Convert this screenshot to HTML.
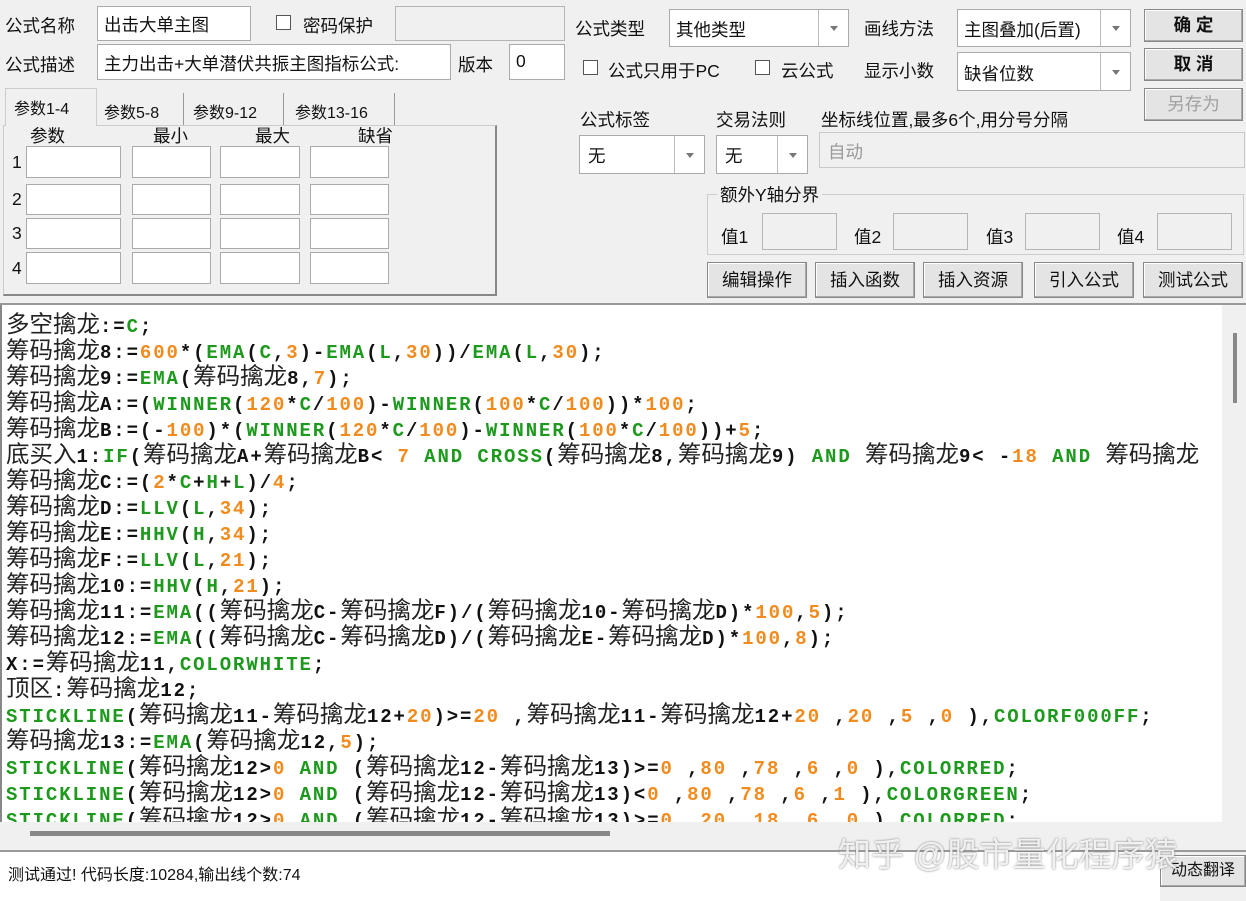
<!DOCTYPE html>
<html><head><meta charset="utf-8"><style>
*{box-sizing:border-box;margin:0;padding:0}
body{width:1246px;height:901px;background:#f0f0f0;font-family:"Liberation Sans","Noto Sans CJK SC",sans-serif;font-size:17.5px;color:#111;position:relative;overflow:hidden}
.a{position:absolute;white-space:nowrap}
.in{position:absolute;background:#fff;border:1px solid #aaa}
.dis{position:absolute;background:#f0f0f0;border:1px solid #b5b5b5}
.btn{position:absolute;background:#e4e4e4;border:1px solid #888;box-shadow:inset -1px -1px 0 #aaa,inset 1px 1px 0 #fff;text-align:center;font-size:17.5px}
.cb{position:absolute;width:15px;height:15px;border:1px solid #555;background:#fff}
.dd{position:absolute;border-left:1px solid #bbb;width:30px;top:0;bottom:0;right:0}
.dd:after{content:"";position:absolute;left:11px;top:50%;margin-top:-2px;border-left:4px solid transparent;border-right:4px solid transparent;border-top:5px solid #777}
#code{position:absolute;left:0;top:305px;width:1222px;height:517px;background:#fff;overflow:hidden;border-left:2px solid #888}
.l{position:absolute;left:4px;white-space:nowrap;font-family:"Liberation Mono","Noto Sans CJK SC",monospace;font-weight:bold;font-size:19px;letter-spacing:1.9px;height:26px;line-height:26px;color:#111}
.c{font-family:"Noto Sans CJK SC","WenQuanYi Zen Hei",sans-serif;font-weight:normal;font-size:23.5px;letter-spacing:0;color:#222}
.g{color:#1d9a1d}.o{color:#f28b1e}
</style></head><body>
<div class="a" style="left:5px;top:13px">公式名称</div>
<div class="in" style="left:97px;top:6px;width:154px;height:35px"><span class="a" style="left:6px;top:5px">出击大单主图</span></div>
<div class="cb" style="left:276px;top:15px"></div>
<div class="a" style="left:303px;top:13px">密码保护</div>
<div class="dis" style="left:395px;top:6px;width:170px;height:35px"></div>
<div class="a" style="left:5px;top:52px">公式描述</div>
<div class="in" style="left:97px;top:44px;width:354px;height:36px"><span class="a" style="left:6px;top:6px">主力出击+大单潜伏共振主图指标公式:</span></div>
<div class="a" style="left:458px;top:52px">版本</div>
<div class="in" style="left:509px;top:44px;width:56px;height:36px"><span class="a" style="left:6px;top:6px">0</span></div>
<div class="a" style="left:5px;top:88px;width:92px;height:38px;border:1px solid #ccc;border-bottom:none;background:#f0f0f0;z-index:2"></div>
<div class="a" style="left:14px;top:95px;font-size:16px;z-index:3">参数1-4</div>
<div class="a" style="left:97px;top:93px;width:87px;height:32px;border-right:1px solid #999"></div>
<div class="a" style="left:104px;top:99px;font-size:16px">参数5-8</div>
<div class="a" style="left:184px;top:93px;width:100px;height:32px;border-right:1px solid #999"></div>
<div class="a" style="left:193px;top:99px;font-size:16px">参数9-12</div>
<div class="a" style="left:284px;top:93px;width:111px;height:32px;border-right:1px solid #999"></div>
<div class="a" style="left:295px;top:99px;font-size:16px">参数13-16</div>
<div class="a" style="left:3px;top:125px;width:494px;height:171px;border:1px solid #ccc;border-right:2px solid #888;border-bottom:2px solid #888"></div>
<div class="a" style="left:30px;top:123px">参数</div><div class="a" style="left:153px;top:123px">最小</div><div class="a" style="left:255px;top:123px">最大</div><div class="a" style="left:358px;top:123px">缺省</div>
<div class="a" style="left:12px;top:152px">1</div><div class="a" style="left:12px;top:189px">2</div><div class="a" style="left:12px;top:223px">3</div><div class="a" style="left:12px;top:258px">4</div>
<div class="in" style="left:26px;top:146px;width:95px;height:32px"></div><div class="in" style="left:132px;top:146px;width:79px;height:32px"></div><div class="in" style="left:220px;top:146px;width:80px;height:32px"></div><div class="in" style="left:310px;top:146px;width:79px;height:32px"></div>
<div class="in" style="left:26px;top:184px;width:95px;height:31px"></div><div class="in" style="left:132px;top:184px;width:79px;height:31px"></div><div class="in" style="left:220px;top:184px;width:80px;height:31px"></div><div class="in" style="left:310px;top:184px;width:79px;height:31px"></div>
<div class="in" style="left:26px;top:218px;width:95px;height:31px"></div><div class="in" style="left:132px;top:218px;width:79px;height:31px"></div><div class="in" style="left:220px;top:218px;width:80px;height:31px"></div><div class="in" style="left:310px;top:218px;width:79px;height:31px"></div>
<div class="in" style="left:26px;top:252px;width:95px;height:32px"></div><div class="in" style="left:132px;top:252px;width:79px;height:32px"></div><div class="in" style="left:220px;top:252px;width:80px;height:32px"></div><div class="in" style="left:310px;top:252px;width:79px;height:32px"></div>
<div class="a" style="left:575px;top:16px">公式类型</div>
<div class="in" style="left:669px;top:9px;width:180px;height:38px"><span class="a" style="left:6px;top:7px">其他类型</span><div class="dd"></div></div>
<div class="a" style="left:864px;top:16px">画线方法</div>
<div class="in" style="left:957px;top:9px;width:174px;height:38px"><span class="a" style="left:6px;top:7px">主图叠加(后置)</span><div class="dd"></div></div>
<div class="cb" style="left:583px;top:60px"></div><div class="a" style="left:608px;top:58px">公式只用于PC</div>
<div class="cb" style="left:755px;top:60px"></div><div class="a" style="left:781px;top:58px">云公式</div>
<div class="a" style="left:864px;top:58px">显示小数</div>
<div class="in" style="left:957px;top:52px;width:174px;height:39px"><span class="a" style="left:6px;top:8px">缺省位数</span><div class="dd"></div></div>
<div class="btn" style="left:1144px;top:9px;width:99px;height:33px;line-height:31px;font-weight:bold">确 定</div>
<div class="btn" style="left:1144px;top:48px;width:99px;height:33px;line-height:31px;font-weight:bold">取 消</div>
<div class="btn" style="left:1144px;top:88px;width:99px;height:33px;line-height:31px;color:#a0a0a0">另存为</div>
<div class="a" style="left:580px;top:107px">公式标签</div>
<div class="a" style="left:716px;top:107px">交易法则</div>
<div class="a" style="left:821px;top:107px">坐标线位置,最多6个,用分号分隔</div>
<div class="in" style="left:579px;top:135px;width:126px;height:39px"><span class="a" style="left:8px;top:7px">无</span><div class="dd"></div></div>
<div class="in" style="left:716px;top:135px;width:92px;height:39px"><span class="a" style="left:8px;top:7px">无</span><div class="dd"></div></div>
<div class="dis" style="left:819px;top:132px;width:426px;height:36px;border-color:#c8c8c8"><span class="a" style="left:8px;top:6px;color:#999">自动</span></div>
<div class="a" style="left:707px;top:194px;width:537px;height:61px;border:1px solid #ccc"></div>
<div class="a" style="left:717px;top:182px;background:#f0f0f0;padding:0 3px">额外Y轴分界</div>
<div class="a" style="left:721px;top:224px">值1</div><div class="dis" style="left:762px;top:213px;width:75px;height:37px"></div>
<div class="a" style="left:854px;top:224px">值2</div><div class="dis" style="left:893px;top:213px;width:75px;height:37px"></div>
<div class="a" style="left:986px;top:224px">值3</div><div class="dis" style="left:1025px;top:213px;width:75px;height:37px"></div>
<div class="a" style="left:1117px;top:224px">值4</div><div class="dis" style="left:1157px;top:213px;width:75px;height:37px"></div>
<div class="btn" style="left:707px;top:262px;width:100px;height:36px;line-height:34px">编辑操作</div>
<div class="btn" style="left:815px;top:262px;width:100px;height:36px;line-height:34px">插入函数</div>
<div class="btn" style="left:923px;top:262px;width:100px;height:36px;line-height:34px">插入资源</div>
<div class="btn" style="left:1034px;top:262px;width:100px;height:36px;line-height:34px">引入公式</div>
<div class="btn" style="left:1143px;top:262px;width:100px;height:36px;line-height:34px">测试公式</div>
<div class="a" style="left:0;top:303px;width:1246px;height:2px;background:#999"></div>
<div id="code">
<div class="l" style="top:4px"><span class="c">多空擒龙</span>:=<span class="g">C</span>;</div>
<div class="l" style="top:30px"><span class="c">筹码擒龙</span>8:=<span class="o">600</span>*(<span class="g">EMA</span>(<span class="g">C</span>,<span class="o">3</span>)-<span class="g">EMA</span>(<span class="g">L</span>,<span class="o">30</span>))/<span class="g">EMA</span>(<span class="g">L</span>,<span class="o">30</span>);</div>
<div class="l" style="top:56px"><span class="c">筹码擒龙</span>9:=<span class="g">EMA</span>(<span class="c">筹码擒龙</span>8,<span class="o">7</span>);</div>
<div class="l" style="top:82px"><span class="c">筹码擒龙</span>A:=(<span class="g">WINNER</span>(<span class="o">120</span>*<span class="g">C</span>/<span class="o">100</span>)-<span class="g">WINNER</span>(<span class="o">100</span>*<span class="g">C</span>/<span class="o">100</span>))*<span class="o">100</span>;</div>
<div class="l" style="top:108px"><span class="c">筹码擒龙</span>B:=(-<span class="o">100</span>)*(<span class="g">WINNER</span>(<span class="o">120</span>*<span class="g">C</span>/<span class="o">100</span>)-<span class="g">WINNER</span>(<span class="o">100</span>*<span class="g">C</span>/<span class="o">100</span>))+<span class="o">5</span>;</div>
<div class="l" style="top:134px"><span class="c">底买入</span>1:<span class="g">IF</span>(<span class="c">筹码擒龙</span>A+<span class="c">筹码擒龙</span>B&lt; <span class="o">7</span> <span class="g">AND</span> <span class="g">CROSS</span>(<span class="c">筹码擒龙</span>8,<span class="c">筹码擒龙</span>9) <span class="g">AND</span> <span class="c">筹码擒龙</span>9&lt; -<span class="o">18</span> <span class="g">AND</span> <span class="c">筹码擒龙</span></div>
<div class="l" style="top:160px"><span class="c">筹码擒龙</span>C:=(<span class="o">2</span>*<span class="g">C</span>+<span class="g">H</span>+<span class="g">L</span>)/<span class="o">4</span>;</div>
<div class="l" style="top:186px"><span class="c">筹码擒龙</span>D:=<span class="g">LLV</span>(<span class="g">L</span>,<span class="o">34</span>);</div>
<div class="l" style="top:212px"><span class="c">筹码擒龙</span>E:=<span class="g">HHV</span>(<span class="g">H</span>,<span class="o">34</span>);</div>
<div class="l" style="top:238px"><span class="c">筹码擒龙</span>F:=<span class="g">LLV</span>(<span class="g">L</span>,<span class="o">21</span>);</div>
<div class="l" style="top:264px"><span class="c">筹码擒龙</span>10:=<span class="g">HHV</span>(<span class="g">H</span>,<span class="o">21</span>);</div>
<div class="l" style="top:290px"><span class="c">筹码擒龙</span>11:=<span class="g">EMA</span>((<span class="c">筹码擒龙</span>C-<span class="c">筹码擒龙</span>F)/(<span class="c">筹码擒龙</span>10-<span class="c">筹码擒龙</span>D)*<span class="o">100</span>,<span class="o">5</span>);</div>
<div class="l" style="top:316px"><span class="c">筹码擒龙</span>12:=<span class="g">EMA</span>((<span class="c">筹码擒龙</span>C-<span class="c">筹码擒龙</span>D)/(<span class="c">筹码擒龙</span>E-<span class="c">筹码擒龙</span>D)*<span class="o">100</span>,<span class="o">8</span>);</div>
<div class="l" style="top:342px">X:=<span class="c">筹码擒龙</span>11,<span class="g">COLORWHITE</span>;</div>
<div class="l" style="top:368px"><span class="c">顶区</span>:<span class="c">筹码擒龙</span>12;</div>
<div class="l" style="top:394px"><span class="g">STICKLINE</span>(<span class="c">筹码擒龙</span>11-<span class="c">筹码擒龙</span>12+<span class="o">20</span>)&gt;=<span class="o">20</span> ,<span class="c">筹码擒龙</span>11-<span class="c">筹码擒龙</span>12+<span class="o">20</span> ,<span class="o">20</span> ,<span class="o">5</span> ,<span class="o">0</span> ),<span class="g">COLORF000FF</span>;</div>
<div class="l" style="top:420px"><span class="c">筹码擒龙</span>13:=<span class="g">EMA</span>(<span class="c">筹码擒龙</span>12,<span class="o">5</span>);</div>
<div class="l" style="top:446px"><span class="g">STICKLINE</span>(<span class="c">筹码擒龙</span>12&gt;<span class="o">0</span> <span class="g">AND</span> (<span class="c">筹码擒龙</span>12-<span class="c">筹码擒龙</span>13)&gt;=<span class="o">0</span> ,<span class="o">80</span> ,<span class="o">78</span> ,<span class="o">6</span> ,<span class="o">0</span> ),<span class="g">COLORRED</span>;</div>
<div class="l" style="top:472px"><span class="g">STICKLINE</span>(<span class="c">筹码擒龙</span>12&gt;<span class="o">0</span> <span class="g">AND</span> (<span class="c">筹码擒龙</span>12-<span class="c">筹码擒龙</span>13)&lt;<span class="o">0</span> ,<span class="o">80</span> ,<span class="o">78</span> ,<span class="o">6</span> ,<span class="o">1</span> ),<span class="g">COLORGREEN</span>;</div>
<div class="l" style="top:498px"><span class="g">STICKLINE</span>(<span class="c">筹码擒龙</span>12&gt;<span class="o">0</span> <span class="g">AND</span> (<span class="c">筹码擒龙</span>12-<span class="c">筹码擒龙</span>13)&gt;=<span class="o">0</span> ,<span class="o">20</span> ,<span class="o">18</span> ,<span class="o">6</span> ,<span class="o">0</span> ),<span class="g">COLORRED</span>;</div>
</div>
<div class="a" style="left:1233px;top:333px;width:4px;height:70px;background:#888"></div>
<div class="a" style="left:30px;top:831px;width:580px;height:5px;background:#888"></div>
<div class="a" style="left:0;top:850px;width:1246px;height:2px;background:#999"></div>
<div class="a" style="left:0;top:852px;width:1160px;height:49px;background:#fff"></div>
<div class="a" style="left:8px;top:861px;font-size:16px">测试通过! 代码长度:10284,输出线个数:74</div>
<div class="btn" style="left:1160px;top:855px;width:86px;height:32px;line-height:30px;font-size:16px">动态翻译</div>
<div class="a" style="left:838px;top:828px;font-size:33px;color:rgba(255,255,255,0.85);text-shadow:0 0 2px #777">知乎 @股市量化程序猿</div>
</body></html>
